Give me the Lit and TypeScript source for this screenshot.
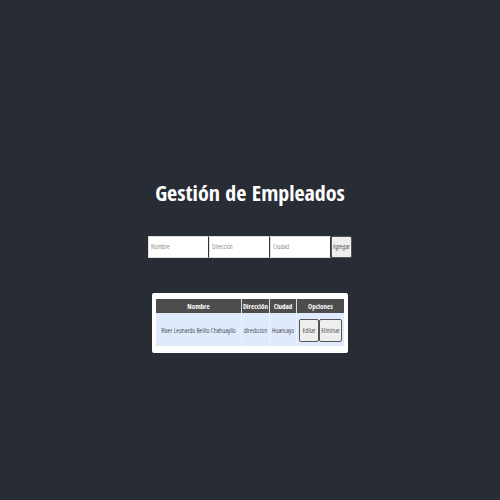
import { LitElement, html, css } from "lit";
import { customElement, state } from "lit/decorators.js";

interface Empleado {
  nombre: string;
  direccion: string;
  ciudad: string;
}

@customElement("app-root")
export class AppRoot extends LitElement {
  static styles = css`
    :host {
      display: flex;
      flex-direction: column;
      align-items: center;
      justify-content: center;
      box-sizing: border-box;
      min-height: 100vh;
      padding: 24px 0 0;
      background: #282c34;
      color: #fff;
      font-family: "Open Sans Condensed Light", "Noto Sans", sans-serif;
    }
    h1 {
      margin: 0 0 24px;
      font-family: "Open Sans Condensed", "Noto Sans", sans-serif;
      font-size: 22px;
      line-height: 40px;
      font-weight: 700;
      white-space: nowrap;
    }
    form {
      display: flex;
      height: 22px;
      margin: 0 0 35px;
    }
    input,
    button {
      box-sizing: border-box;
      min-width: 0;
      margin: 0;
      font-family: inherit;
      font-size: 7px;
      font-weight: 300;
      border: 1px solid #555;
    }
    input {
      width: 61px;
      padding: 0 2px;
      background: #fff;
      color: #222;
      border-color: #ddd #333 #ddd #ddd;
    }
    form button {
      width: 21px;
    }
    input::placeholder {
      color: #555;
    }
    button {
      padding: 0;
      background: #efefef;
      color: #000;
      border-radius: 2px;
      text-align: center;
      white-space: nowrap;
    }
    .card {
      padding: 6px 4px 7px;
      background: #fff;
      border-radius: 2px;
    }
    table {
      width: 188px;
      table-layout: fixed;
      border-collapse: separate;
      border-spacing: 0;
      color: #000;
      font-size: 7px;
      font-weight: 300;
    }
    th,
    td {
      box-sizing: border-box;
      padding: 2px 0 0;
      text-align: center;
      white-space: nowrap;
    }
    th {
      height: 14px;
      background: #4d4d4d;
      color: #fff;
      font-family: "Open Sans Condensed", "Noto Sans", sans-serif;
      font-weight: 700;
      line-height: 10px;
    }
    th + th {
      border-left: 1px solid #ddd;
    }
    td {
      height: 33px;
      background: #dfebfd;
    }
    td + td {
      border-left: 1px solid #edf3fe;
    }
    .nombre {
      width: 85px;
    }
    .direccion {
      width: 28px;
    }
    .ciudad {
      width: 27px;
    }
    .acciones {
      display: grid;
      grid-template-columns: 20px 23px;
      justify-content: center;
      height: 23px;
    }
    .acciones button {
      border-color: #555;
    }
  `;

  @state() private empleados: Empleado[] = [
    { nombre: "River Leonardo Belito Chahuayllo", direccion: "diredccion", ciudad: "Huancayo" },
  ];

  render() {
    return html`
      <h1>Gestión de Empleados</h1>
      <form @submit=${(e: Event) => e.preventDefault()}>
        <input name="nombre" aria-label="Nombre" placeholder="Nombre" />
        <input name="direccion" aria-label="Dirección" placeholder="Dirección" />
        <input name="ciudad" aria-label="Ciudad" placeholder="Ciudad" />
        <button type="submit">Agregar</button>
      </form>
      <div class="card">
        <table>
          <thead>
            <tr>
              <th class="nombre" scope="col">Nombre</th>
              <th class="direccion" scope="col">Dirección</th>
              <th class="ciudad" scope="col">Ciudad</th>
              <th scope="col">Opciones</th>
            </tr>
          </thead>
          <tbody>
            ${this.empleados.map(
              (e) => html`
                <tr>
                  <td>${e.nombre}</td>
                  <td>${e.direccion}</td>
                  <td>${e.ciudad}</td>
                  <td>
                    <div class="acciones">
                      <button type="button">Editar</button>
                      <button type="button">Eliminar</button>
                    </div>
                  </td>
                </tr>
              `,
            )}
          </tbody>
        </table>
      </div>
    `;
  }
}
